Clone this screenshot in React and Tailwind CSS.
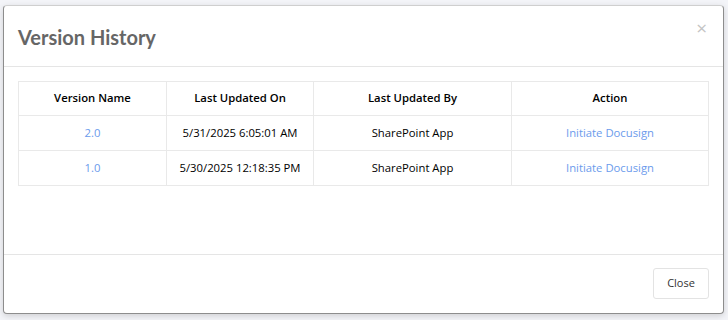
import React from "react";

const rows = [
  { v: "2.0", on: "5/31/2025 6:05:01 AM", by: "SharePoint App" },
  { v: "1.0", on: "5/30/2025 12:18:35 PM", by: "SharePoint App" },
];

export default function App() {
  const cell = "border border-[#e9e9e9] text-center align-middle";
  return (
    <div className="w-[728px] h-[320px] bg-[#f3f4f8] pt-[5px] pl-[3px]" style={{ fontFamily: '"Open Sans", "Noto Sans", sans-serif' }}>
      <div className="w-[721px] h-[309px] bg-white border border-[#8d8d8d] border-t-[#cfcfcf] rounded-[4px] shadow-[0_2px_6px_rgba(0,0,0,0.15)] flex flex-col">
        <div className="h-[61px] border-b border-[#e5e5e5] flex items-center justify-between pl-[14px] pr-[15px] shrink-0">
          <h4 className="text-[20px] font-bold text-[#666666] mt-[1px]" style={{ fontFamily: 'Lato, sans-serif' }}>Version History</h4>
          <span className="text-[19px] leading-none text-[#c4c4c4] -mt-[16px] mr-[1px]">×</span>
        </div>
        <div className="flex-1 pt-[14px] px-[14px]">
          <table className="w-[691px] border-collapse text-[11.3px] text-black">
            <thead>
              <tr className="h-[34px]">
                <th className={`${cell} w-[148px] font-semibold`}>Version Name</th>
                <th className={`${cell} w-[147px] font-semibold`}>Last Updated On</th>
                <th className={`${cell} w-[198px] font-semibold`}>Last Updated By</th>
                <th className={`${cell} font-semibold`}>Action</th>
              </tr>
            </thead>
            <tbody>
              {rows.map((r) => (
                <tr key={r.v} className="h-[35px]">
                  <td className={`${cell} text-[#6b9bec]`}>{r.v}</td>
                  <td className={cell}>{r.on}</td>
                  <td className={cell}>{r.by}</td>
                  <td className={`${cell} text-[#6b9bec]`}>Initiate Docusign</td>
                </tr>
              ))}
            </tbody>
          </table>
        </div>
        <div className="h-[59px] border-t border-[#e5e5e5] flex items-center justify-end pr-[14px] shrink-0">
          <button className="h-[31px] w-[56px] border border-[#e3e3e3] rounded-[3px] bg-white text-[11px] text-[#333] mt-[-1px]">Close</button>
        </div>
      </div>
    </div>
  );
}
